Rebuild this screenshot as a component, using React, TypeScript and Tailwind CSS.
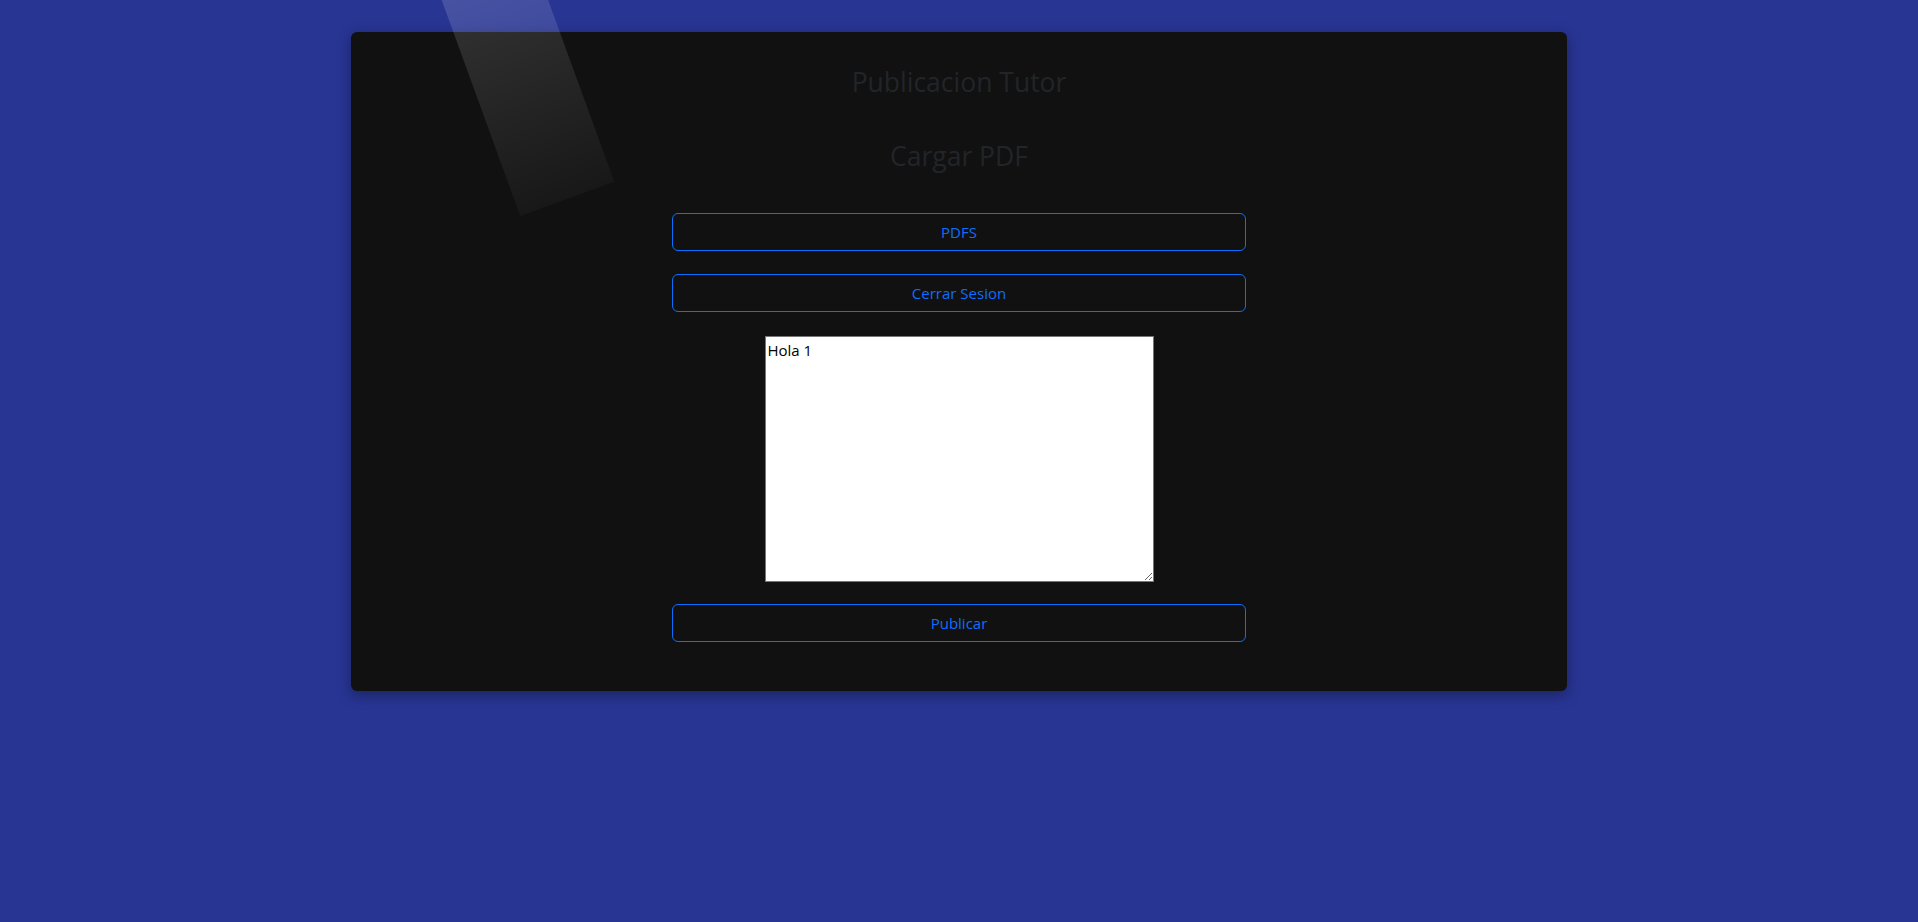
import React from "react";

const font = { fontFamily: '"Open Sans", "Noto Sans", sans-serif' };

const OutlineButton = ({ label, className = "" }: { label: string; className?: string }) => {
  return (
    <button
      type="button"
      className={`w-[574px] h-[38px] rounded-[6px] border border-[#0d6efd] bg-transparent text-[15px] text-[#0d6efd] ${className}`}
    >
      {label}
    </button>
  );
};

export default function App() {
  return (
    <div className="relative min-h-[922px] overflow-hidden bg-[#283593] pt-8" style={font}>
      {/* card */}
      <div className="mx-auto flex w-[1216px] flex-col items-center rounded-md bg-[#111111] pt-[34px] pb-[49px] shadow-[0_4px_14px_rgba(0,0,0,0.35)]">
        <h2 className="text-[26.5px] leading-[1.27] text-[#212529]">Publicacion Tutor</h2>
        <h3 className="mt-[40px] text-[26.5px] leading-[1.27] text-[#212529]">Cargar PDF</h3>

        <OutlineButton label="PDFS" className="mt-[40px]" />
        <OutlineButton label="Cerrar Sesion" className="mt-[23px]" />

        <textarea
          defaultValue="Hola 1"
          className="mt-6 h-[246px] w-[389px] border border-[#767676] bg-white px-[2px] pt-[4px] text-[15px] leading-[1.3] text-black"
        />

        <OutlineButton label="Publicar" className="mt-[22px]" />
      </div>

      {/* light stripe */}
      <div className="pointer-events-none absolute left-[466px] top-[-92px] h-[300px] w-[100px] -rotate-20 bg-gradient-to-b from-white/[0.18] to-white/[0.03]" />
    </div>
  );
}
